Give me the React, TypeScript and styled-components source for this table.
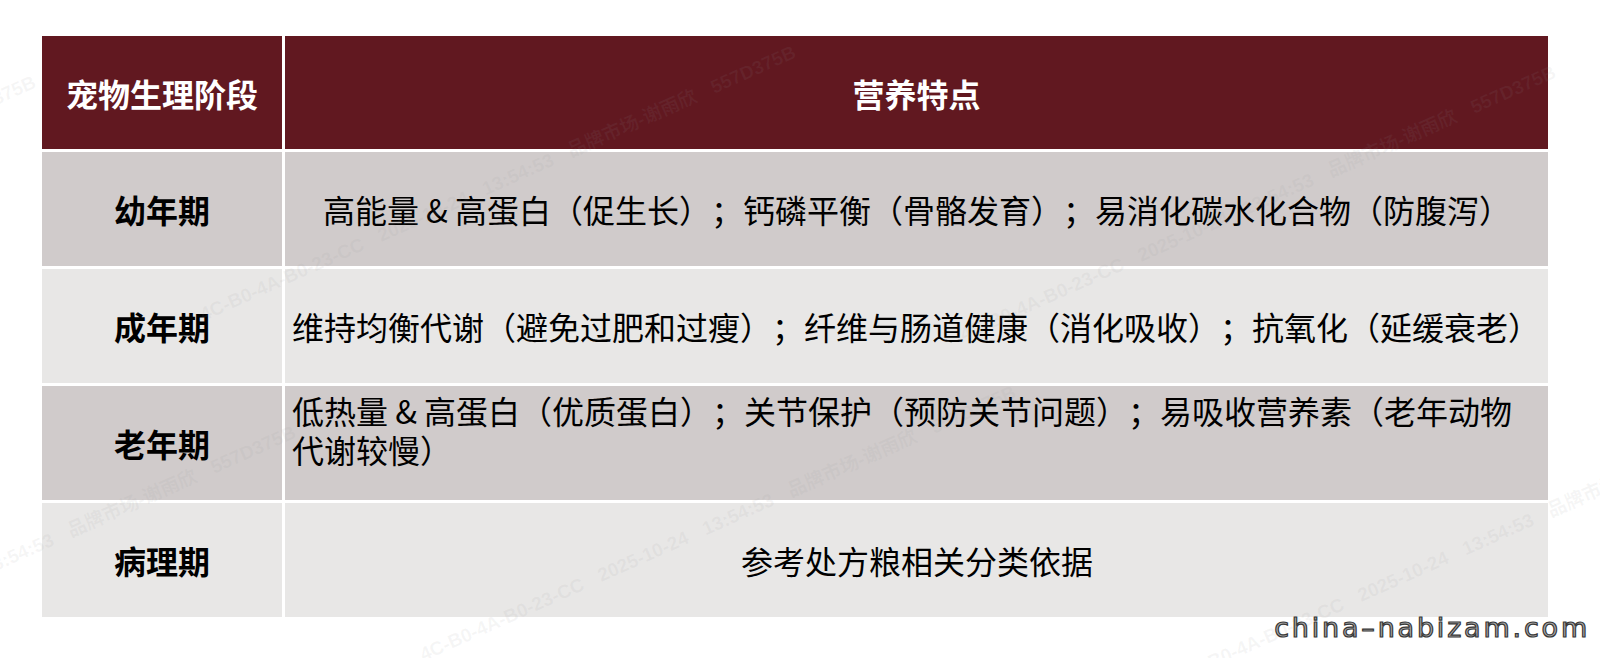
import { Fragment } from "react";
import styled, { createGlobalStyle } from "styled-components";

const GlobalStyle = createGlobalStyle`
  html, body {
    margin: 0;
    padding: 0;
    background: #ffffff;
  }

  body {
    font-family: "Noto Sans CJK SC", "Noto Sans", sans-serif;
    color: #000;
  }
`;

const Page = styled.div`
  position: relative;
  width: 1600px;
  height: 658px;
  overflow: hidden;
  padding: 36px 0 0 42px;
  box-sizing: border-box;
  background: #fff;
`;

const Table = styled.div`
  display: grid;
  grid-template-columns: 240px 1263px;
  grid-template-rows: 113px repeat(4, 114px);
  column-gap: 3px;
  row-gap: 3px;
`;

const HeadCell = styled.div`
  display: flex;
  align-items: center;
  justify-content: center;
  background: #611820;
  color: #fff;
  font-size: 32px;
  font-weight: 700;
`;

const StageCell = styled.div<{ $shade: "dark" | "light" }>`
  display: flex;
  align-items: center;
  justify-content: center;
  background: ${(p) => (p.$shade === "dark" ? "#d0cbcb" : "#e8e7e6")};
  font-size: 32px;
  font-weight: 700;
`;

const NoteCell = styled.div<{
  $shade: "dark" | "light";
  $align: "center" | "left";
  $top?: boolean;
}>`
  display: flex;
  align-items: ${(p) => (p.$top ? "flex-start" : "center")};
  justify-content: ${(p) => (p.$align === "center" ? "center" : "flex-start")};
  padding: ${(p) => (p.$top ? "5px 6px 0 7px" : "0 6px 0 7px")};
  background: ${(p) => (p.$shade === "dark" ? "#d0cbcb" : "#e8e7e6")};
  font-size: 32px;
  line-height: 39px;
  white-space: nowrap;
  text-spacing-trim: space-all;
  font-kerning: none;
`;

// 水印层
const Watermark = styled.div`
  position: absolute;
  inset: 0;
  pointer-events: none;
`;

const Mark = styled.span`
  position: absolute;
  white-space: nowrap;
  font-family: "Liberation Sans", "Noto Sans CJK SC", sans-serif;
  font-size: 19px;
  font-weight: 700;
  color: rgba(150, 150, 150, 0.09);
  transform: rotate(-24deg);
  transform-origin: left center;
  word-spacing: 12px;
`;

const SiteMark = styled.div`
  position: absolute;
  right: 10px;
  bottom: 15px;
  font-family: "DejaVu Sans", sans-serif;
  font-size: 27px;
  letter-spacing: 2.8px;
  color: #ababab;
  -webkit-text-stroke: 1.2px #383838;
`;

const rows = [
  {
    stage: "幼年期",
    shade: "dark" as const,
    align: "center" as const,
    text: "高能量 & 高蛋白（促生长）；钙磷平衡（骨骼发育）；易消化碳水化合物（防腹泻）",
  },
  {
    stage: "成年期",
    shade: "light" as const,
    align: "left" as const,
    text: "维持均衡代谢（避免过肥和过瘦）；纤维与肠道健康（消化吸收）；抗氧化（延缓衰老）",
  },
  {
    stage: "老年期",
    shade: "dark" as const,
    align: "left" as const,
    top: true,
    text: (
      <span>
        低热量 & 高蛋白（优质蛋白）；关节保护（预防关节问题）；易吸收营养素（老年动物
        <br />
        代谢较慢）
      </span>
    ),
  },
  {
    stage: "病理期",
    shade: "light" as const,
    align: "center" as const,
    text: "参考处方粮相关分类依据",
  },
];

const markText = "4C-B0-4A-B0-23-CC 2025-10-24 13:54:53 品牌市场-谢雨欣 557D375B";

const marks = [
  { left: -560, top: 330 },
  { left: 200, top: 300 },
  { left: 960, top: 320 },
  { left: -300, top: 680 },
  { left: 420, top: 640 },
  { left: 1180, top: 660 },
];

export default function App() {
  return (
    <>
      <GlobalStyle />
      <Page>
        <Table>
          <HeadCell>宠物生理阶段</HeadCell>
          <HeadCell>营养特点</HeadCell>
          {rows.map((r) => (
            <Fragment key={r.stage}>
              <StageCell $shade={r.shade}>{r.stage}</StageCell>
              <NoteCell $shade={r.shade} $align={r.align} $top={r.top}>
                {r.text}
              </NoteCell>
            </Fragment>
          ))}
        </Table>
        <Watermark>
          {marks.map((m, i) => (
            <Mark key={i} style={{ left: m.left, top: m.top }}>
              {markText}
            </Mark>
          ))}
        </Watermark>
        <SiteMark>china–nabizam.com</SiteMark>
      </Page>
    </>
  );
}
